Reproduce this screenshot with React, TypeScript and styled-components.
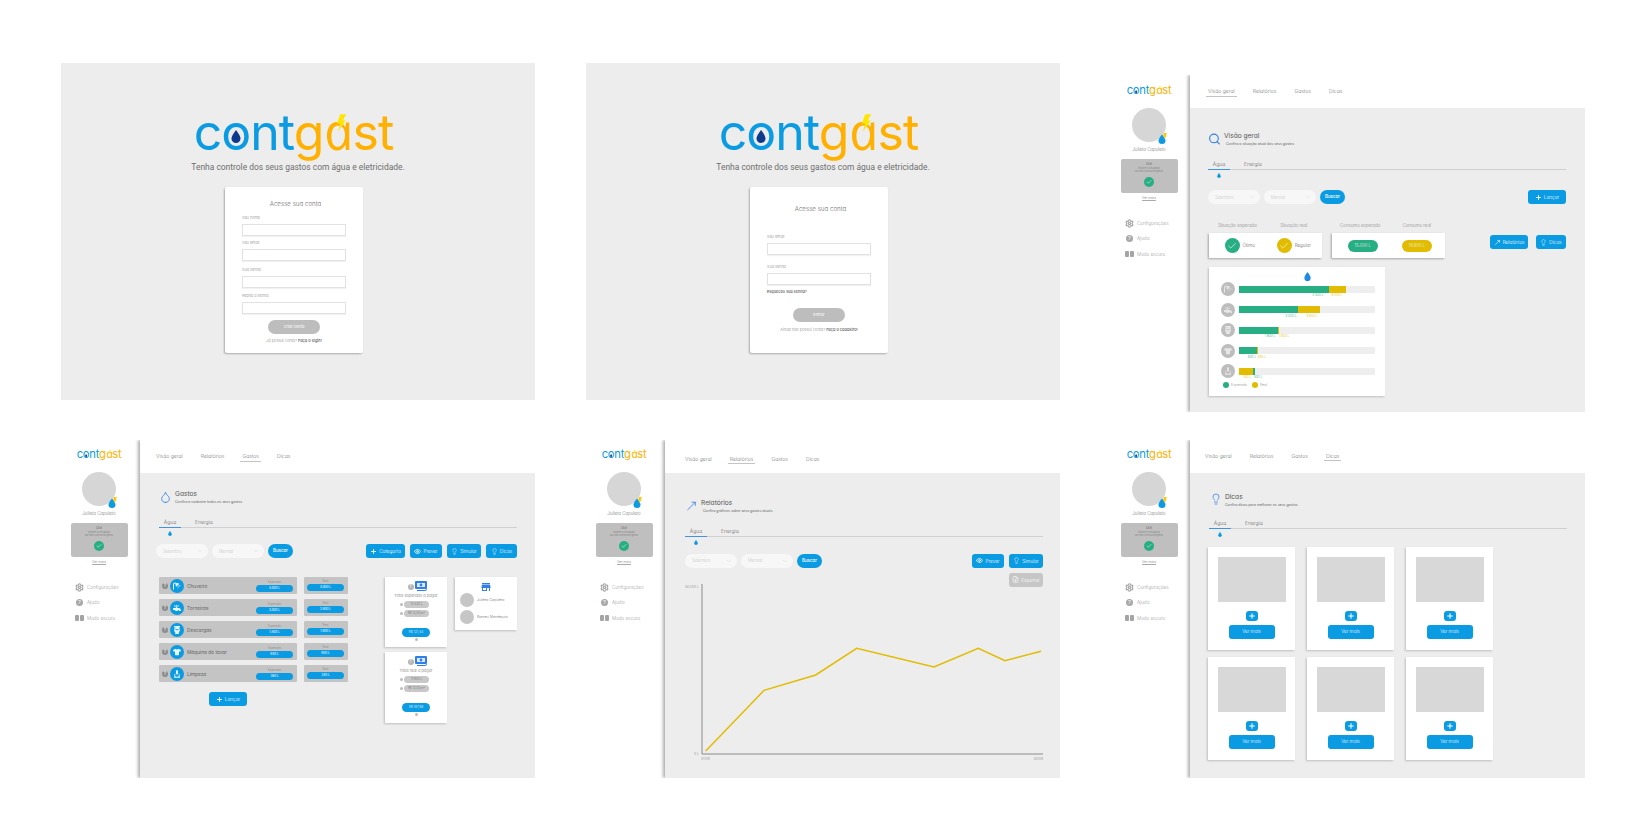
import React from 'react';
import styled, { createGlobalStyle } from 'styled-components';
import { Search, Droplet, Lightbulb, Plus, Eye, Check, Settings, ChevronDown, MoveUpRight, FileDown } from 'lucide-react';
import { FaFaucet, FaToilet, FaTshirt, FaShower } from 'react-icons/fa';
import { MdCleaningServices, MdStore } from 'react-icons/md';

const BLUE = '#0a9be3';
const ICON_BLUE = '#2f7fe6';
const GREEN = '#27ae83';
const YELLOW = '#e1bc00';

const GlobalStyle = createGlobalStyle`
  html, body {
    margin: 0;
    background: #fff;
  }
  body {
    font-family: Inter, "Noto Sans", sans-serif;
    font-feature-settings: "cv11";
    font-weight: 300;
    color: #7a7a7a;
  }
  * {
    box-sizing: border-box;
  }
`;

const Board = styled.main`
  width: 1650px;
  height: 835px;
  overflow: hidden;
  padding: 63px 0 0 60px;
  display: grid;
  grid-template-columns: repeat(3, 475px);
  grid-template-rows: 377px 338px;
  column-gap: 50px;
`;

/* logo */
const LogoWrap = styled.div<{ $size: number; $push?: number }>`
  font-family: Inter, sans-serif;
  font-size: ${p => p.$size}px;
  font-weight: 400;
  line-height: 1;
  letter-spacing: -0.02em;
  white-space: nowrap;
  color: ${BLUE};
  margin-right: ${p => p.$push || 0}px;
`;

const LogoGold = styled.span`
  color: #ffb000;
`;

const LogoO = styled.span`
  position: relative;
  display: inline-block;
`;

const LogoDrop = styled.svg`
  position: absolute;
  left: 50%;
  top: 0.46em;
  width: 0.2em;
  height: 0.26em;
  margin-left: -0.1em;
`;

/* Open Sans italic has the one-storey a of the wordmark, the skew stands it upright */
const LogoA = styled.span`
  position: relative;
  display: inline-block;
  font-family: "Open Sans", sans-serif;
  font-style: italic;
  font-size: 1.03em;
  transform: skewX(12deg);
  letter-spacing: 0;
`;

const LogoBolt = styled.svg`
  position: absolute;
  left: 0.28em;
  top: 0.18em;
  width: 0.21em;
  height: 0.35em;
  transform: skewX(-12deg);
`;

const Logo = ({ size, push }: { size: number; push?: number }) => (
  <LogoWrap $size={size} $push={push}>
    c
    <LogoO>
      o
      <LogoDrop viewBox="0 0 20 26">
        <path d="M10 0C10 0 1 11 1 17a9 9 0 0 0 18 0C19 11 10 0 10 0z" fill="#0d3a8c" />
      </LogoDrop>
    </LogoO>
    nt
    <LogoGold>
      g
      <LogoA>
        a
        <LogoBolt viewBox="0 0 22 36">
          <path d="M10 0h12l-7 13h6L5 36l5-17H3z" fill="#ffe600" />
        </LogoBolt>
      </LogoA>
      st
    </LogoGold>
  </LogoWrap>
);

/* login screens */
const LoginScreen = styled.section`
  width: 474px;
  height: 337px;
  margin-left: 1px;
  padding-top: 42px;
  background: #ededed;
  display: flex;
  flex-direction: column;
  align-items: center;
`;

const Tagline = styled.p`
  margin: 4px 0 0;
  font-family: Roboto, sans-serif;
  font-feature-settings: normal;
  font-size: 8.45px;
  font-weight: 400;
  line-height: 12px;
  color: #6e6e6e;
`;

const LoginCard = styled.form<{ $top: number }>`
  width: 138px;
  height: 166px;
  margin: 14px 8px 0 0;
  padding: ${p => p.$top}px 17px 0;
  background: #fff;
  border-radius: 2px;
  box-shadow: -1px 1px 2px rgba(0, 0, 0, 0.28);
  display: flex;
  flex-direction: column;
`;

const LoginTitle = styled.h2`
  margin: 0 0 0 3px;
  font-size: 6.2px;
  font-weight: 300;
  line-height: 8px;
  text-align: center;
  color: #6f6f6f;
`;

const FieldLabel = styled.label<{ $top: number }>`
  display: block;
  margin-top: ${p => p.$top}px;
  font-size: 3.8px;
  line-height: 5px;
  color: #888;
`;

const FieldInput = styled.div`
  width: 104px;
  height: 12px;
  margin-top: 4px;
  background: #fff;
  border: 1px solid #e2e2e2;
  box-shadow: 0 1px 1px rgba(0, 0, 0, 0.05);
`;

const Forgot = styled.a`
  margin-top: 4px;
  font-size: 3.8px;
  font-weight: 500;
  line-height: 5px;
  color: #555;
`;

const SubmitButton = styled.div<{ $top: number }>`
  align-self: center;
  width: 52px;
  height: 14px;
  margin-top: ${p => p.$top}px;
  border-radius: 7px;
  background: #bdbdbd;
  color: #eee;
  font-size: 3.8px;
  font-weight: 600;
  line-height: 14px;
  text-align: center;
`;

const LoginFoot = styled.p<{ $top: number }>`
  margin: ${p => p.$top}px -10px 0;
  font-size: 3.9px;
  line-height: 5px;
  text-align: center;
  color: #888;
  white-space: nowrap;
  b {
    font-weight: 500;
    color: #555;
  }
`;

/* dashboard shell */
const Dashboard = styled.section<{ $drop?: number }>`
  height: ${p => (p.$drop ? 337 : 338)}px;
  margin-top: ${p => p.$drop || 0}px;
  display: grid;
  grid-template-columns: 80px 395px;
`;

const Sidebar = styled.aside<{ $top: number }>`
  padding: ${p => p.$top}px 2px 0 0;
  display: flex;
  flex-direction: column;
  align-items: center;
`;

const AvatarBox = styled.div`
  position: relative;
  width: 34px;
  height: 34px;
  margin-top: 12px;
  border-radius: 50%;
  background: #d6d6d6;
`;

const AvatarBadge = styled.svg`
  position: absolute;
  right: -1px;
  bottom: -2px;
  width: 9px;
  height: 11px;
`;

const UserName = styled.div`
  margin-top: 5px;
  font-size: 4.4px;
  line-height: 6px;
`;

const SummaryCard = styled.div`
  width: 57px;
  height: 34px;
  margin-top: 6px;
  padding-top: 4px;
  border-radius: 2px;
  background: #bfbfbf;
  display: flex;
  flex-direction: column;
  align-items: center;
  font-size: 2.7px;
  line-height: 3.6px;
  text-align: center;
  color: #7b7b7b;
`;

const SummaryHello = styled.span`
  font-size: 3.2px;
  font-weight: 500;
`;

const StatusDot = styled.span<{ $color: string; $size: number }>`
  width: ${p => p.$size}px;
  height: ${p => p.$size}px;
  flex: none;
  border-radius: 50%;
  background: ${p => p.$color};
  color: #fff;
  display: flex;
  align-items: center;
  justify-content: center;
`;

const SummaryDot = styled(StatusDot)`
  margin-top: 3px;
`;

const SeeMore = styled.a`
  margin-top: 2px;
  font-size: 3.4px;
  line-height: 6px;
  text-decoration: underline;
  text-decoration-color: #aaa;
`;

const MenuList = styled.nav`
  align-self: stretch;
  margin-top: 18px;
  padding-left: 15px;
  display: flex;
  flex-direction: column;
  gap: 7.5px;
`;

const MenuRow = styled.div`
  height: 8px;
  display: flex;
  align-items: center;
  gap: 3px;
  font-size: 4.6px;
  color: #a0a0a0;
`;

const MenuIcon = styled.span`
  width: 9px;
  display: flex;
  justify-content: center;
  color: #a4a4a4;
`;

const HelpDot = styled.span<{ $size: number; $color?: string }>`
  width: ${p => p.$size}px;
  height: ${p => p.$size}px;
  flex: none;
  border-radius: 50%;
  background: ${p => p.$color || '#a8a8a8'};
  color: #e6e6e6;
  font-size: ${p => p.$size * 0.7}px;
  font-weight: 700;
  line-height: ${p => p.$size}px;
  text-align: center;
`;

const ModeIcon = styled.span`
  display: flex;
  gap: 0.5px;
  i {
    width: 4.5px;
    height: 5.5px;
    border-radius: 1px;
    background: #a4a4a4;
  }
`;

const MainColumn = styled.div`
  display: flex;
  flex-direction: column;
  box-shadow: -2px 0 3px rgba(0, 0, 0, 0.32);
  clip-path: inset(0 0 0 -6px);
`;

const TopNav = styled.nav<{ $left: number; $shift: number }>`
  height: 33px;
  flex: none;
  padding: ${p => p.$shift}px 0 0 ${p => p.$left}px;
  display: flex;
  align-items: center;
  gap: 14px;
  background: #fff;
`;

const NavLink = styled.a<{ $active?: boolean }>`
  padding: 0 2px 1.5px;
  font-size: 5.1px;
  line-height: 6px;
  color: #7a7a7a;
  white-space: nowrap;
  border-bottom: 1px solid ${p => (p.$active ? '#c4c4c4' : 'transparent')};
`;

const Panel = styled.div<{ $top: number; $left: number; $right?: number }>`
  flex: 1;
  min-height: 0;
  padding: ${p => p.$top}px ${p => p.$right ?? 18}px 0 ${p => p.$left}px;
  background: #ededed;
`;

const HeadingRow = styled.header`
  display: flex;
  align-items: flex-start;
  gap: 3px;
`;

const HeadingIcon = styled.span`
  width: 13px;
  flex: none;
  display: flex;
  justify-content: center;
  color: ${ICON_BLUE};
`;

const HeadingTitle = styled.h1`
  margin: 0;
  font-size: 6.6px;
  font-weight: 400;
  line-height: 8px;
  color: #555;
`;

const HeadingSub = styled.p<{ $indent?: number }>`
  margin: 1.5px 0 0 ${p => p.$indent || 0}px;
  font-size: 3.5px;
  font-weight: 400;
  line-height: 5px;
  color: #666;
`;

const MediaTabs = styled.div<{ $top?: number }>`
  margin-top: ${p => p.$top ?? 15}px;
  height: 8px;
  border-bottom: 1px solid #d0d0d0;
  display: flex;
  gap: 14px;
`;

const MediaTab = styled.span<{ $active?: boolean }>`
  width: ${p => (p.$active ? '22px' : 'auto')};
  height: 8px;
  font-size: 5px;
  line-height: 5px;
  text-align: center;
  color: #6e6e6e;
  border-bottom: ${p => (p.$active ? `1px solid #3d93e8` : 'none')};
`;

const TabDrop = styled.svg`
  display: block;
  width: 4px;
  height: 5px;
  margin: 3px 0 0 9px;
  color: ${BLUE};
`;

const Toolbar = styled.div<{ $top: number; $shift?: number }>`
  margin: ${p => p.$top}px 0 0 ${p => p.$shift || 0}px;
  display: flex;
  align-items: flex-start;
  justify-content: space-between;
`;

const FilterGroup = styled.div`
  display: flex;
  gap: 4px;
`;

const SelectPill = styled.div`
  width: 52px;
  height: 14px;
  padding: 0 5px 0 7px;
  border-radius: 7px;
  background: #f7f7f7;
  color: #c9c9c9;
  font-size: 4.2px;
  display: flex;
  align-items: center;
  justify-content: space-between;
`;

const SearchButton = styled.div`
  width: 25px;
  height: 14px;
  border-radius: 7px;
  background: ${BLUE};
  color: #fff;
  font-size: 4.4px;
  font-weight: 500;
  line-height: 14px;
  text-align: center;
`;

const ActionGroup = styled.div<{ $gap?: number }>`
  display: flex;
  gap: ${p => p.$gap || 5}px;
`;

const ActionButton = styled.div<{ $width: number; $muted?: boolean }>`
  width: ${p => p.$width}px;
  height: 14px;
  flex: none;
  border-radius: 3px;
  background: ${p => (p.$muted ? '#c6c6c6' : BLUE)};
  color: #fff;
  font-size: 4.7px;
  display: flex;
  align-items: center;
  justify-content: center;
  gap: 2px;
`;

const ActionStack = styled.div`
  display: flex;
  flex-direction: column;
  align-items: flex-end;
  gap: 5px;
`;

const MenuItems = () => (
  <MenuList>
    <MenuRow>
      <MenuIcon><Settings size={9} strokeWidth={3} /></MenuIcon>
      Configurações
    </MenuRow>
    <MenuRow>
      <MenuIcon><HelpDot $size={7.5}>?</HelpDot></MenuIcon>
      Ajuda
    </MenuRow>
    <MenuRow>
      <MenuIcon><ModeIcon><i /><i /></ModeIcon></MenuIcon>
      Modo escuro
    </MenuRow>
  </MenuList>
);

const SideColumn = ({ top }: { top: number }) => (
  <Sidebar $top={top}>
    <Logo size={11.2} />
    <AvatarBox>
      <AvatarBadge viewBox="0 0 18 22">
        <path d="M8 3C8 3 1 11 1 15a7 7 0 0 0 14 0C15 11 8 3 8 3z" fill={BLUE} />
        <path d="M12 0h6l-3 5h3l-7 8 2-6h-3z" fill="#ffc400" />
      </AvatarBadge>
    </AvatarBox>
    <UserName>Julieta Capuleto</UserName>
    <SummaryCard>
      <SummaryHello>Olá!</SummaryHello>
      <span>Está é a situação<br />do seu consumo geral</span>
      <SummaryDot $color={GREEN} $size={10}><Check size={6} strokeWidth={2} /></SummaryDot>
    </SummaryCard>
    <SeeMore>Ver mais</SeeMore>
    <MenuItems />
  </Sidebar>
);

const NAV = ['Visão geral', 'Relatórios', 'Gastos', 'Dicas'];

const Nav = ({ active, left, shift }: { active: string; left: number; shift: number }) => (
  <TopNav $left={left} $shift={shift}>
    {NAV.map(item => (
      <NavLink key={item} $active={item === active}>{item}</NavLink>
    ))}
  </TopNav>
);

const Heading = ({ icon, title, sub, indent }: { icon: React.ReactNode; title: string; sub: string; indent?: number }) => (
  <HeadingRow>
    <HeadingIcon>{icon}</HeadingIcon>
    <div>
      <HeadingTitle>{title}</HeadingTitle>
      <HeadingSub $indent={indent}>{sub}</HeadingSub>
    </div>
  </HeadingRow>
);

const dropPath = 'M10 0C10 0 1 11 1 17a9 9 0 0 0 18 0C19 11 10 0 10 0z';

const Tabs = ({ top }: { top?: number }) => (
  <>
    <MediaTabs $top={top}>
      <MediaTab $active>Água</MediaTab>
      <MediaTab>Energia</MediaTab>
    </MediaTabs>
    <TabDrop viewBox="0 0 20 26"><path d={dropPath} fill="currentColor" /></TabDrop>
  </>
);

const Filters = () => (
  <FilterGroup>
    <SelectPill>Setembro<ChevronDown size={6} strokeWidth={1.5} /></SelectPill>
    <SelectPill>Mensal<ChevronDown size={6} strokeWidth={1.5} /></SelectPill>
    <SearchButton>Buscar</SearchButton>
  </FilterGroup>
);

/* visão geral */
const StatusRow = styled.div`
  margin: 19px 0 0 1px;
  display: flex;
  align-items: flex-end;
  gap: 10px;
`;

const StatusGroup = styled.div`
  width: 113px;
`;

const StatusLabels = styled.div`
  display: grid;
  grid-template-columns: 1fr 1fr;
  font-size: 4.4px;
  line-height: 6px;
  margin-bottom: 4px;
  text-align: center;
  white-space: nowrap;
  color: #8a8a8a;
`;

const StatusCard = styled.div`
  height: 25px;
  background: #fff;
  box-shadow: -1px 1px 2px rgba(0, 0, 0, 0.3);
  display: grid;
  grid-template-columns: 1fr 1fr;
`;

const StatusCell = styled.div`
  display: flex;
  align-items: center;
  justify-content: center;
  gap: 3px;
  font-size: 4.5px;
  color: #666;
  &:first-child {
    padding-left: 5px;
  }
`;

const VolumePill = styled.span<{ $color: string }>`
  width: 30px;
  height: 12px;
  border-radius: 6px;
  background: ${p => p.$color};
  color: #f3f3f3;
  font-size: 4.2px;
  line-height: 12px;
  text-align: center;
`;

const OverviewActions = styled(ActionGroup)`
  margin: 0 0 9px auto;
`;

const BarsCard = styled.div`
  width: 176px;
  height: 129px;
  margin: 9px 0 0 1px;
  padding: 5px 10px 0 12px;
  background: #fff;
  box-shadow: -1px 1px 2px rgba(0, 0, 0, 0.2);
`;

const BarsDrop = styled.svg`
  display: block;
  width: 7px;
  height: 9px;
  margin: 0 auto 1px 83px;
`;

const BarRow = styled.div`
  height: 14px;
  margin-bottom: 6.5px;
  display: flex;
  align-items: center;
  gap: 4px;
`;

const BarIcon = styled.span`
  width: 14px;
  height: 14px;
  flex: none;
  border-radius: 50%;
  background: #bdbdbd;
  color: #e6e6e6;
  display: flex;
  align-items: center;
  justify-content: center;
`;

const BarTrack = styled.div`
  position: relative;
  width: 136px;
  height: 7px;
  display: flex;
  border-radius: 1px;
  background: #eee;
`;

const BarFill = styled.span<{ $color: string }>`
  height: 7px;
  background: ${p => p.$color};
`;

const BarValue = styled.span<{ $color: string }>`
  position: absolute;
  top: 7.5px;
  font-size: 3.2px;
  line-height: 4px;
  white-space: nowrap;
  transform: translateX(-50%);
  color: ${p => p.$color};
`;

const Legend = styled.div`
  margin: -3px 0 0 2px;
  display: flex;
  align-items: center;
  gap: 2px;
  font-size: 3.6px;
  line-height: 6px;
  color: #999;
`;

const LegendDot = styled.i<{ $color: string; $space?: number }>`
  width: 6px;
  height: 6px;
  margin-left: ${p => p.$space || 0}px;
  border-radius: 50%;
  background: ${p => p.$color};
`;

const BAR_ICONS = [FaShower, FaFaucet, FaToilet, FaTshirt, MdCleaningServices];

const BARS = [
  { fills: [[90, GREEN], [17, YELLOW]], values: [[79, '4.500 L', GREEN], [98, '6.000 L', YELLOW]] },
  { fills: [[59, GREEN], [22, YELLOW]], values: [[52, '3.000 L', GREEN], [73, '3.900 L', YELLOW]] },
  { fills: [[39, GREEN], [1, YELLOW]], values: [[31, '1.800 L', GREEN], [45, '1.900 L', YELLOW]] },
  { fills: [[18, GREEN], [1, YELLOW]], values: [[13, '900 L', GREEN], [23, '950 L', YELLOW]] },
  { fills: [[14, YELLOW], [2, GREEN]], values: [[8, '140 L', YELLOW], [19, '300 L', GREEN]] },
] as { fills: [number, string][]; values: [number, string, string][] }[];

const OverviewScreen = () => (
  <Dashboard $drop={12}>
    <SideColumn top={9} />
    <MainColumn>
      <Nav active="Visão geral" left={16} shift={2} />
      <Panel $top={24} $left={18} $right={19}>
        <Heading icon={<Search size={14} strokeWidth={2} />} title="Visão geral" sub="Confira a situação atual dos seus gastos" indent={2} />
        <Tabs />
        <Toolbar $top={12.5}>
          <Filters />
          <ActionButton $width={38}><Plus size={7} strokeWidth={3} />Lançar</ActionButton>
        </Toolbar>
        <StatusRow>
          <StatusGroup>
            <StatusLabels><span>Situação esperada</span><span>Situação real</span></StatusLabels>
            <StatusCard>
              <StatusCell><StatusDot $color={GREEN} $size={15}><Check size={10} strokeWidth={1.5} /></StatusDot>Ótimo</StatusCell>
              <StatusCell><StatusDot $color={YELLOW} $size={15}><Check size={10} strokeWidth={1.5} /></StatusDot>Regular</StatusCell>
            </StatusCard>
          </StatusGroup>
          <StatusGroup>
            <StatusLabels><span>Consumo esperado</span><span>Consumo real</span></StatusLabels>
            <StatusCard>
              <StatusCell><VolumePill $color={GREEN}>15.000 L</VolumePill></StatusCell>
              <StatusCell><VolumePill $color={YELLOW}>14.800 L</VolumePill></StatusCell>
            </StatusCard>
          </StatusGroup>
          <OverviewActions $gap={8}>
            <ActionButton $width={38}><MoveUpRight size={7} strokeWidth={2} />Relatórios</ActionButton>
            <ActionButton $width={30}><Lightbulb size={7} strokeWidth={1.5} />Dicas</ActionButton>
          </OverviewActions>
        </StatusRow>
        <BarsCard>
          <BarsDrop viewBox="0 0 20 26"><path d={dropPath} fill="#1f8ae6" /></BarsDrop>
          {BARS.map((bar, i) => {
            const Icon = BAR_ICONS[i];
            return (
              <BarRow key={i}>
                <BarIcon><Icon size={8} /></BarIcon>
                <BarTrack>
                  {bar.fills.map(([w, c], j) => <BarFill key={j} $color={c} style={{ width: w }} />)}
                  {bar.values.map(([x, text, c], j) => <BarValue key={j} $color={c} style={{ left: x }}>{text}</BarValue>)}
                </BarTrack>
              </BarRow>
            );
          })}
          <Legend>
            <LegendDot $color={GREEN} />Esperado
            <LegendDot $color={YELLOW} $space={3} />Real
          </Legend>
        </BarsCard>
      </Panel>
    </MainColumn>
  </Dashboard>
);

/* gastos */
const ExpenseGrid = styled.div`
  margin-top: 19px;
  display: grid;
  grid-template-columns: 218px 62px 62px;
  column-gap: 8px;
  align-items: start;
`;

const ExpenseColumn = styled.div`
  display: flex;
  flex-direction: column;
  gap: 5px;
`;

const ExpenseLine = styled.div`
  display: flex;
  gap: 7px;
`;

const ExpenseRow = styled.div`
  width: 138px;
  height: 17px;
  padding: 0 4px 0 3px;
  border-radius: 1px;
  background: #c4c4c4;
  display: flex;
  align-items: center;
  gap: 2px;
`;

const RoundIcon = styled.span`
  width: 14px;
  height: 14px;
  flex: none;
  border-radius: 50%;
  background: ${BLUE};
  color: #e8f6ff;
  display: flex;
  align-items: center;
  justify-content: center;
`;

const ExpenseName = styled.span`
  flex: 1;
  margin-left: 1px;
  font-size: 4.8px;
  font-weight: 400;
  color: #666;
  white-space: nowrap;
`;

const MeasureBox = styled.div`
  width: 37px;
  display: flex;
  flex-direction: column;
  align-items: center;
  font-size: 2.9px;
  line-height: 5px;
  color: #8a8a8a;
`;

const MeasurePill = styled.span`
  width: 37px;
  height: 7px;
  border-radius: 3.5px;
  background: ${BLUE};
  color: #e8f6ff;
  font-size: 3px;
  font-weight: 500;
  line-height: 7px;
  text-align: center;
`;

const RealBox = styled.div`
  width: 44px;
  height: 17px;
  padding: 2px 0 0 3px;
  border-radius: 1px;
  background: #c4c4c4;
`;

const AddButton = styled(ActionButton)`
  margin: 5px 0 0 50px;
`;

const TotalCard = styled.div<{ $height: number }>`
  height: ${p => p.$height}px;
  padding-top: 4px;
  background: #fff;
  box-shadow: -1px 1px 2px rgba(0, 0, 0, 0.2);
  display: flex;
  flex-direction: column;
  align-items: center;
`;

const TotalIconRow = styled.div`
  display: flex;
  align-items: center;
  gap: 1px;
  margin-left: 2px;
`;

const TotalLabel = styled.div`
  margin-top: 1px;
  font-size: 4px;
  line-height: 6px;
  color: #6f6f6f;
  white-space: nowrap;
`;

const ChipRow = styled.div`
  margin-top: 2px;
  display: flex;
  align-items: center;
  gap: 1px;
  margin-left: -3px;
`;

const TinyDot = styled.i`
  width: 3px;
  height: 3px;
  border-radius: 50%;
  background: #bbb;
`;

const Chip = styled.span`
  width: 25px;
  height: 7px;
  border-radius: 3.5px;
  background: #c8c8c8;
  color: #6f6f6f;
  font-size: 3px;
  line-height: 7px;
  text-align: center;
`;

const TotalPill = styled.span`
  width: 28px;
  height: 9px;
  margin-top: 11px;
  margin-bottom: 1px;
  border-radius: 4.5px;
  background: ${BLUE};
  color: #e8f6ff;
  font-size: 3.2px;
  line-height: 9px;
  text-align: center;
`;

const PeopleCard = styled.div`
  height: 53px;
  padding: 4px 5px 0;
  background: #fff;
  box-shadow: -1px 1px 2px rgba(0, 0, 0, 0.2);
  display: flex;
  flex-direction: column;
`;

const PeopleIcon = styled.span`
  display: flex;
  justify-content: center;
  height: 10px;
  margin-bottom: -1px;
  color: ${ICON_BLUE};
`;

const PersonRow = styled.div`
  margin-top: 3px;
  display: flex;
  align-items: center;
  gap: 3px;
  font-size: 3.6px;
  color: #6f6f6f;
  white-space: nowrap;
`;

const PersonFace = styled.span`
  width: 14px;
  height: 14px;
  flex: none;
  border-radius: 50%;
  background: #c6c6c6;
`;

const MoneyIcon = () => (
  <svg width="12" height="11" viewBox="0 0 12 11">
    <rect x="0" y="0" width="12" height="8" rx="1" fill={ICON_BLUE} />
    <rect x="2" y="2" width="8" height="4" fill="#dfeaff" />
    <circle cx="6" cy="4" r="1.4" fill={ICON_BLUE} />
    <path d="M2 9.5h8l2-1" stroke={ICON_BLUE} strokeWidth="1" fill="none" />
  </svg>
);

const EXPENSES = [
  { name: 'Chuveiro', icon: FaShower, expected: '4.000 L', real: '4.000 L' },
  { name: 'Torneiras', icon: FaFaucet, expected: '3.000 L', real: '3.900 L' },
  { name: 'Descargas', icon: FaToilet, expected: '1.800 L', real: '1.900 L' },
  { name: 'Máquina de lavar', icon: FaTshirt, expected: '940 L', real: '900 L' },
  { name: 'Limpeza', icon: MdCleaningServices, expected: '360 L', real: '240 L' },
];

const TotalBlock = ({ height, label, volume, price }: { height: number; label: string; volume: string; price: string }) => (
  <TotalCard $height={height}>
    <TotalIconRow><HelpDot $size={6} $color="#b5b5b5">?</HelpDot><MoneyIcon /></TotalIconRow>
    <TotalLabel>{label}</TotalLabel>
    <ChipRow><TinyDot /><Chip>{volume}</Chip></ChipRow>
    <ChipRow><TinyDot /><Chip>R$ 12,00/m²</Chip></ChipRow>
    <TotalPill>{price}</TotalPill>
    <TinyDot />
  </TotalCard>
);

const ExpensesScreen = () => (
  <Dashboard>
    <SideColumn top={8} />
    <MainColumn>
      <Nav active="Gastos" left={14} shift={2} />
      <Panel $top={17} $left={19}>
        <Heading icon={<Droplet size={14} strokeWidth={1.5} />} title="Gastos" sub="Confira e cadastre todos os seus gastos" />
        <Tabs />
        <Toolbar $top={8.5} $shift={-3}>
          <Filters />
          <ActionGroup>
            <ActionButton $width={39}><Plus size={7} strokeWidth={3} />Categoria</ActionButton>
            <ActionButton $width={32}><Eye size={7} strokeWidth={2.5} />Prever</ActionButton>
            <ActionButton $width={34}><Lightbulb size={7} strokeWidth={1.5} />Simular</ActionButton>
            <ActionButton $width={31}><Lightbulb size={7} strokeWidth={1.5} />Dicas</ActionButton>
          </ActionGroup>
        </Toolbar>
        <ExpenseGrid>
          <ExpenseColumn>
            {EXPENSES.map(({ name, icon: Icon, expected, real }) => (
              <ExpenseLine key={name}>
                <ExpenseRow>
                  <HelpDot $size={6} $color="#8c8c8c">?</HelpDot>
                  <RoundIcon><Icon size={8} /></RoundIcon>
                  <ExpenseName>{name}</ExpenseName>
                  <MeasureBox>Esperado<MeasurePill>{expected}</MeasurePill></MeasureBox>
                </ExpenseRow>
                <RealBox>
                  <MeasureBox>Real<MeasurePill>{real}</MeasurePill></MeasureBox>
                </RealBox>
              </ExpenseLine>
            ))}
            <AddButton $width={38}><Plus size={7} strokeWidth={3} />Lançar</AddButton>
          </ExpenseColumn>
          <ExpenseColumn>
            <TotalBlock height={70} label="Total esperado a pagar" volume="10.420 L" price="R$ 121,44" />
            <TotalBlock height={71} label="Total real a pagar" volume="11.900 L" price="R$ 167,98" />
          </ExpenseColumn>
          <PeopleCard>
            <PeopleIcon><MdStore size={12} /></PeopleIcon>
            <PersonRow><PersonFace />Julieta Capuleto</PersonRow>
            <PersonRow><PersonFace />Romeu Montéquio</PersonRow>
          </PeopleCard>
        </ExpenseGrid>
      </Panel>
    </MainColumn>
  </Dashboard>
);

/* relatórios */
const ChartCanvas = styled.svg`
  display: block;
  margin-top: -6px;
  overflow: visible;
`;

const AxisText = styled.text`
  font-size: 3.4px;
  fill: #8a8a8a;
`;

const ReportsScreen = () => (
  <Dashboard>
    <SideColumn top={8} />
    <MainColumn>
      <Nav active="Relatórios" left={18} shift={7} />
      <Panel $top={26} $left={20} $right={17}>
        <Heading icon={<MoveUpRight size={14} strokeWidth={1.5} />} title="Relatórios" sub="Confira gráficos sobre seus gastos atuais" indent={2} />
        <Tabs />
        <Toolbar $top={9}>
          <Filters />
          <ActionStack>
            <ActionGroup>
              <ActionButton $width={32}><Eye size={7} strokeWidth={2.5} />Prever</ActionButton>
              <ActionButton $width={34}><Lightbulb size={7} strokeWidth={1.5} />Simular</ActionButton>
            </ActionGroup>
            <ActionButton $width={34} $muted><FileDown size={7} strokeWidth={2} />Exportar</ActionButton>
          </ActionStack>
        </Toolbar>
        <ChartCanvas width="358" height="185" viewBox="0 0 358 185">
          <path d="M17 3V173H358" fill="none" stroke="#8a8a8a" strokeWidth="1" />
          <polyline
            points="20.7,170 79,109.3 130.7,94 171.7,67.3 249,86 293.3,67.3 320,79.7 356,70.3"
            fill="none"
            stroke={YELLOW}
            strokeWidth="1.5"
          />
          <AxisText x="14" y="7" textAnchor="end">50.000 L</AxisText>
          <AxisText x="14" y="174" textAnchor="end">0 L</AxisText>
          <AxisText x="16" y="179">01/09</AxisText>
          <AxisText x="358" y="179" textAnchor="end">30/09</AxisText>
        </ChartCanvas>
      </Panel>
    </MainColumn>
  </Dashboard>
);

/* dicas */
const TipsGrid = styled.div`
  margin: 10px 0 0 -1px;
  display: grid;
  grid-template-columns: repeat(3, 87px);
  grid-auto-rows: 103px;
  gap: 7px 12px;
`;

const TipCard = styled.article`
  padding-top: 10px;
  background: #fff;
  box-shadow: -1px 1px 2px rgba(0, 0, 0, 0.2);
  display: flex;
  flex-direction: column;
  align-items: center;
`;

const TipImage = styled.div`
  width: 68px;
  height: 45px;
  background: #d8d8d8;
`;

const TipPlus = styled.span`
  width: 12px;
  height: 10px;
  margin-top: 9px;
  border-radius: 3px;
  background: ${BLUE};
  color: #fff;
  display: flex;
  align-items: center;
  justify-content: center;
`;

const TipButton = styled.div`
  width: 46px;
  height: 14px;
  margin-top: 4px;
  border-radius: 3px;
  background: ${BLUE};
  color: #f2faff;
  font-size: 4.6px;
  line-height: 14px;
  text-align: center;
`;

const TipsScreen = () => (
  <Dashboard>
    <SideColumn top={8} />
    <MainColumn>
      <Nav active="Dicas" left={13} shift={1} />
      <Panel $top={20} $left={19}>
        <Heading icon={<Lightbulb size={12} strokeWidth={1.5} />} title="Dicas" sub="Confira dicas para melhorar os seus gastos" />
        <Tabs top={13} />
        <TipsGrid>
          {[0, 1, 2, 3, 4, 5].map(i => (
            <TipCard key={i}>
              <TipImage />
              <TipPlus><Plus size={8} strokeWidth={3} /></TipPlus>
              <TipButton>Ver mais</TipButton>
            </TipCard>
          ))}
        </TipsGrid>
      </Panel>
    </MainColumn>
  </Dashboard>
);

const App = () => (
  <>
    <GlobalStyle />
    <Board>
      <LoginScreen>
        <Logo size={50} push={9} />
        <Tagline>Tenha controle dos seus gastos com água e eletricidade.</Tagline>
        <LoginCard $top={13}>
          <LoginTitle>Acesse sua conta</LoginTitle>
          <FieldLabel $top={6.5}>Seu nome</FieldLabel>
          <FieldInput />
          <FieldLabel $top={4}>Seu email</FieldLabel>
          <FieldInput />
          <FieldLabel $top={6.5}>Sua senha</FieldLabel>
          <FieldInput />
          <FieldLabel $top={4.5}>Repita a senha</FieldLabel>
          <FieldInput />
          <SubmitButton $top={6}>Criar conta</SubmitButton>
          <LoginFoot $top={4.5}>Já possui conta? <b>Faça o login!</b></LoginFoot>
        </LoginCard>
      </LoginScreen>
      <LoginScreen>
        <Logo size={50} push={9} />
        <Tagline>Tenha controle dos seus gastos com água e eletricidade.</Tagline>
        <LoginCard $top={18}>
          <LoginTitle>Acesse sua conta</LoginTitle>
          <FieldLabel $top={20.5}>Seu email</FieldLabel>
          <FieldInput />
          <FieldLabel $top={9.5}>Sua senha</FieldLabel>
          <FieldInput />
          <Forgot>Esqueceu sua senha?</Forgot>
          <SubmitButton $top={13.5}>Entrar</SubmitButton>
          <LoginFoot $top={5.5}>Ainda não possui conta? <b>Faça o cadastro!</b></LoginFoot>
        </LoginCard>
      </LoginScreen>
      <OverviewScreen />
      <ExpensesScreen />
      <ReportsScreen />
      <TipsScreen />
    </Board>
  </>
);

export default App;
